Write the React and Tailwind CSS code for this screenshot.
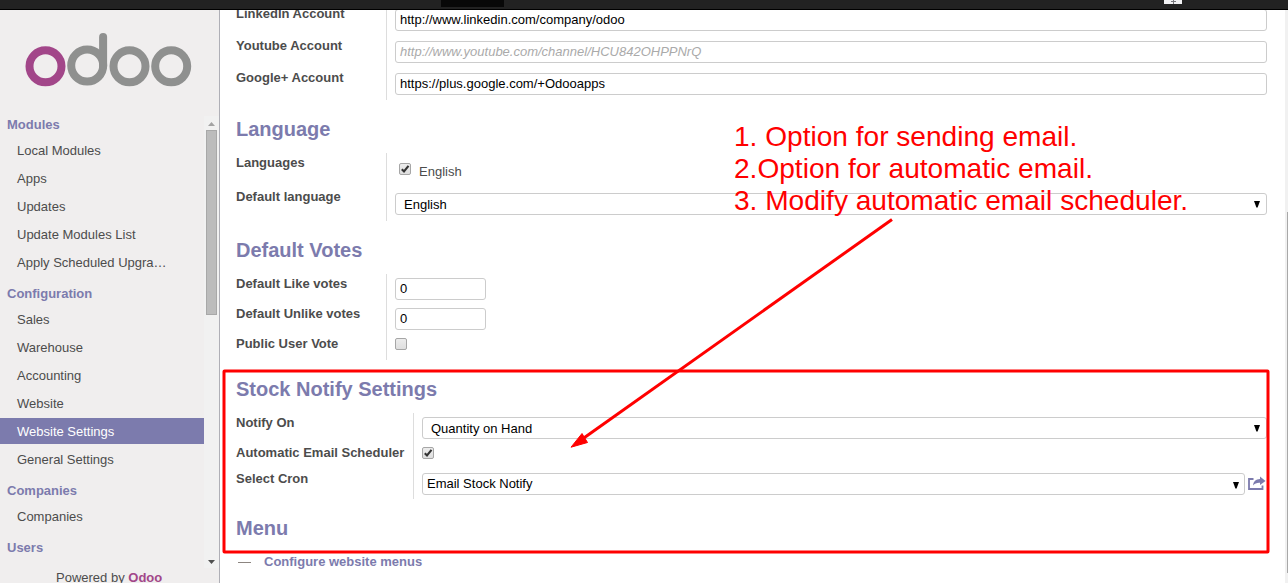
import React from 'react';

const menu = [
  { title: 'Modules', items: ['Local Modules', 'Apps', 'Updates', 'Update Modules List', 'Apply Scheduled Upgra…'] },
  { title: 'Configuration', items: ['Sales', 'Warehouse', 'Accounting', 'Website', 'Website Settings', 'General Settings'] },
  { title: 'Companies', items: ['Companies'] },
  { title: 'Users', items: [] },
];

function Logo() {
  return (
    <svg className="block shrink-0" width="219" height="106" viewBox="0 10 219 106" fill="none" strokeWidth="8">
      <circle cx="45.5" cy="66.3" r="16" stroke="#a24689" />
      <g stroke="#8f908f">
        <circle cx="87.2" cy="65.6" r="16" />
        <path d="M103.1 37v29" strokeLinecap="round" />
        <circle cx="129.5" cy="66.3" r="16" />
        <circle cx="171.2" cy="66.3" r="16" />
      </g>
    </svg>
  );
}

function Sidebar() {
  return (
    <aside className="flex w-[220px] shrink-0 flex-col border-r border-[#afafb6] bg-[#f0eeee]">
      <Logo />
      <div className="flex h-[452px] shrink-0 overflow-hidden">
        <nav className="-mt-2 w-[204px]">
          {menu.map((section) => (
            <div key={section.title}>
              <h3 className="h-[29px] pt-[9px] pl-[7px] font-bold text-[#7c7bad]">{section.title}</h3>
              {section.items.map((item) => (
                <div
                  key={item}
                  className={
                    item === 'Website Settings'
                      ? 'mb-0.5 h-[26px] bg-[#7c7bad] pt-1.5 pl-[17px] whitespace-nowrap text-white'
                      : 'mb-0.5 h-[26px] pt-1.5 pl-[17px] whitespace-nowrap'
                  }
                >
                  {item}
                </div>
              ))}
            </div>
          ))}
        </nav>
        <div className="flex w-[15px] flex-col items-center bg-[#f1f1f1]">
          <svg className="block shrink-0" width="15" height="14">
            <path d="M4 10h7L7.5 6z" fill="#a3a3a3" />
          </svg>
          <div className="h-[185px] w-[11px] shrink-0 border border-[#a8a8a8] bg-[#bcbcbc]" />
          <svg className="mt-auto block shrink-0" width="15" height="14">
            <path d="M4 6h7L7.5 10z" fill="#505050" />
          </svg>
        </div>
      </div>
      <div className="pt-0.5 pl-14 whitespace-nowrap">
        Powered by <b className="text-[#a24689]">Odoo</b>
      </div>
    </aside>
  );
}

function Heading({ children }) {
  return <h2 className="h-[36px] text-[20px] leading-[24px] font-bold text-[#7c7bad]">{children}</h2>;
}

function Row({ label, height = 'h-[30px]', labelWidth = 'w-[150px]', pad = 'pt-1', children }) {
  return (
    <div className={`flex ${height}`}>
      <div className={`shrink-0 pt-0.5 font-bold whitespace-nowrap ${labelWidth}`}>{label}</div>
      <div className={`flex min-w-0 flex-1 items-start border-l border-[#ddd] pl-2 ${pad}`}>{children}</div>
    </div>
  );
}

function Field({ children, className = 'flex-1 text-black' }) {
  return (
    <div className={`h-[22px] rounded-[3px] border border-[#ccc] bg-white pt-0.5 pl-1 ${className}`}>{children}</div>
  );
}

function Select({ children, pad = 'pt-[3px] pl-2' }) {
  return (
    <div className={`flex h-[22px] flex-1 rounded-[3px] border border-[#ccc] bg-white text-black ${pad}`}>
      {children}
      <svg className="mt-1 mr-1.5 ml-auto block" width="6" height="7">
        <path d="M0 0h6L3.6 6.5H2.4z" fill="#000" />
      </svg>
    </div>
  );
}

function CronSelect({ children }) {
  return (
    <div className="flex h-[22px] flex-1 rounded-[3px] border border-[#ccc] bg-white pt-0.5 pl-1 text-black">
      {children}
      <svg className="mt-1.5 mr-[5px] ml-auto block" width="6" height="7">
        <path d="M0 0h6L3.6 6.5H2.4z" fill="#000" />
      </svg>
    </div>
  );
}

function Checkbox({ checked, className = '' }) {
  return (
    <svg className={`block shrink-0 ${className}`} width="12" height="12" viewBox="0 0 12 12">
      <defs>
        <linearGradient id="box" x1="0" y1="0" x2="0" y2="1">
          <stop offset="0" stopColor="#ededed" />
          <stop offset="1" stopColor="#dedede" />
        </linearGradient>
      </defs>
      <rect x="0.5" y="0.5" width="11" height="11" rx="1.5" fill="url(#box)" stroke="#a6a6a6" />
      {checked && <path d="M2.8 6.2l2.2 2.3 4.5-5.7" fill="none" stroke="#333" strokeWidth="2.1" />}
    </svg>
  );
}

function ShareIcon() {
  return (
    <svg className="mt-[3px] ml-[3px] block shrink-0" width="19" height="15" viewBox="0 0 19 15">
      <path d="M5.500 3H1v10h13.500V9.500" fill="none" stroke="#7c7bad" strokeWidth="1.8" />
      <path d="M12 0.500L17.500 5 12 9V6.700C9 6.500 6.800 7.300 5 9.600C5.300 5.500 8 3.200 12 3z" fill="#7c7bad" />
    </svg>
  );
}

function Annotations() {
  return (
    <>
      <svg className="pointer-events-none absolute top-0 left-0" width="1288" height="583">
        <rect x="224" y="371" width="1044" height="181" rx="0.5" fill="none" stroke="#f00" strokeWidth="3" />
        <path d="M892 219.500L581 440" stroke="#f00" strokeWidth="3" />
        <path d="M571 447.200L582 433.500l5.500 9z" fill="#f00" stroke="#f00" strokeLinejoin="round" />
      </svg>
      <div className="pointer-events-none absolute top-[121px] left-[734px] text-[28.08px] leading-[32px] whitespace-nowrap text-[#f00]">
        <p>1. Option for sending email.</p>
        <p>2.Option for automatic email.</p>
        <p>3. Modify automatic email scheduler.</p>
      </div>
    </>
  );
}

export default function App() {
  return (
    <div className="relative flex h-[583px] w-[1288px] flex-col overflow-hidden bg-white font-['Liberation_Sans',Arial,sans-serif] text-[13px] leading-[15px] text-[#4c4c4c]">
      <header className="flex h-[10px] shrink-0 items-start border-b border-black bg-[#222]">
        <div className="ml-[441px] h-[7px] w-[63px] bg-[#080808]" />
        <svg className="ml-[660px] block" width="18" height="4">
          <rect width="18" height="4" fill="#f1f1f3" />
          <path d="M7 1.500h5M9.500 0v4" stroke="#77777c" />
        </svg>
      </header>
      <div className="flex min-h-0 flex-1">
        <Sidebar />
        <main className="min-w-0 flex-1 overflow-hidden pr-[18px] pl-4">
          <section className="-mt-1.5">
            <Row label="LinkedIn Account" height="h-[32px]" pad="pt-[5px]">
              <Field>http://www.linkedin.com/company/odoo</Field>
            </Row>
            <Row label="Youtube Account" height="h-[32px]" pad="pt-[5px]">
              <Field className="flex-1 text-[#aaa] italic">http://www.youtube.com/channel/HCU842OHPPNrQ</Field>
            </Row>
            <Row label="Google+ Account" height="h-[32px]" pad="pt-[5px]">
              <Field>https://plus.google.com/+Odooapps</Field>
            </Row>
          </section>
          <section className="pt-[17px]">
            <Heading>Language</Heading>
            <Row label="Languages" height="h-[34px]" pad="pt-2.5">
              <Checkbox checked className="ml-1" />
              <span className="mt-px ml-2">English</span>
            </Row>
            <Row label="Default language" height="h-[34px]" pad="pt-1.5">
              <Select>English</Select>
            </Row>
          </section>
          <section className="pt-[17px]">
            <Heading>Default Votes</Heading>
            <Row label="Default Like votes">
              <Field className="w-[91px] text-black">0</Field>
            </Row>
            <Row label="Default Unlike votes">
              <Field className="w-[91px] text-black">0</Field>
            </Row>
            <Row label="Public User Vote" height="h-[26px]">
              <Checkbox />
            </Row>
          </section>
          <section className="pt-[17px]">
            <Heading>Stock Notify Settings</Heading>
            <Row label="Notify On" labelWidth="w-[177px]">
              <Select>Quantity on Hand</Select>
            </Row>
            <Row label="Automatic Email Scheduler" labelWidth="w-[177px]" height="h-[26px]">
              <Checkbox checked />
            </Row>
            <Row label="Select Cron" labelWidth="w-[177px]">
              <CronSelect>Email Stock Notify</CronSelect>
              <ShareIcon />
            </Row>
          </section>
          <section className="pt-[17px]">
            <Heading>Menu</Heading>
            <div className="flex items-center pt-0.5 pl-0.5">
              <span className="mt-px h-px w-[13px] bg-[#8c8580]" />
              <a className="ml-[13px] font-bold text-[#7c7bad]">Configure website menus</a>
            </div>
          </section>
        </main>
        <div className="flex w-[3px] flex-col bg-[#f1f1f1] pt-[202px]">
          <div className="ml-auto h-[361px] w-px bg-[#a8a8a8]" />
        </div>
      </div>
      <Annotations />
    </div>
  );
}
